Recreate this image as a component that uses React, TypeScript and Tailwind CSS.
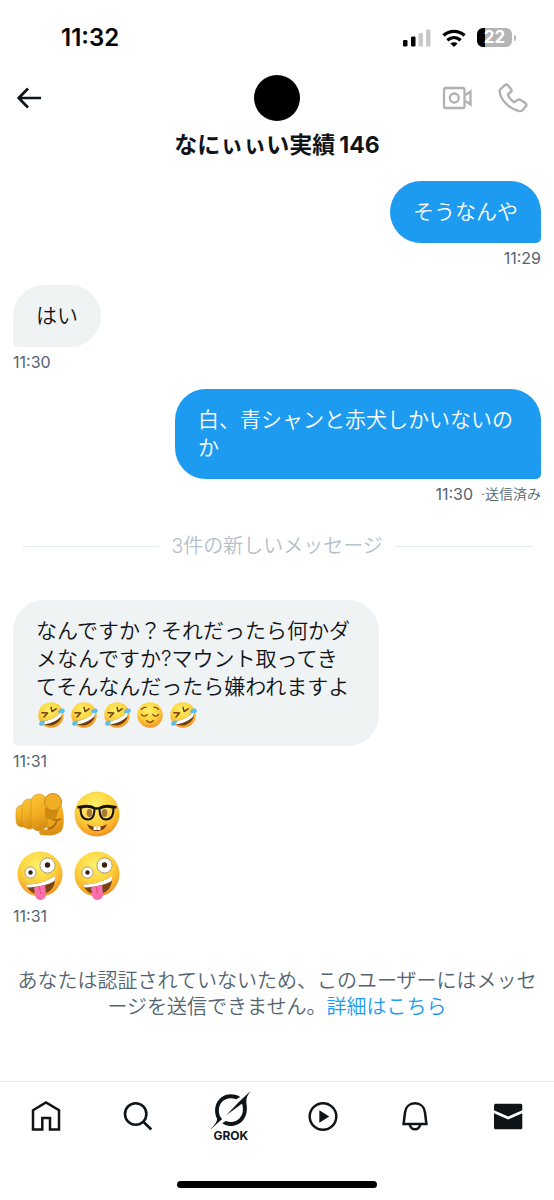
import type { ReactNode } from 'react'

function Face({ className, label, children }: { className: string; label: string; children: ReactNode }) {
  return (
    <svg viewBox="0 0 46 46" role="img" aria-label={label} className={className}>
      <defs>
        <radialGradient id="face" cx="0.45" cy="0.3" r="0.72">
          <stop offset="0" stopColor="#fff06a" />
          <stop offset="0.55" stopColor="#fdd23c" />
          <stop offset="0.85" stopColor="#f8a92a" />
          <stop offset="1" stopColor="#ea8a1e" />
        </radialGradient>
      </defs>
      <circle cx="23" cy="23" r="22.5" fill="url(#face)" />
      {children}
    </svg>
  )
}

function Rofl() {
  return (
    <Face className="h-[26px] w-[26px] overflow-visible" label="🤣">
      <path d="M6 35C18 34 32 28 42 17c2 9-2 18-11 22-9 5-19 3-25-4Z" fill="#6f3d12" />
      <path d="M6 35C18 34 32 28 42 17c.5 3 .3 6-.8 8.500C33 33 22 38.500 10.500 39Z" fill="#fff" />
      <path d="M7 19l10 .5-6.500 7M23 9.500l2 7.500 7-5" fill="none" stroke="#6b3d10" strokeWidth="2.600" strokeLinecap="round" strokeLinejoin="round" />
      <path d="M13 33c-5-1-10 1-11 4-.8 4 3 6 6 4.500 2.500-1.500 4-5 5-8.500Z" fill="#5bbdf0" />
      <path d="M35 18c1-4 5-7 9-6.500 4 1 4.500 5 2 7-3 2-7 1-11-.5Z" fill="#5bbdf0" />
    </Face>
  )
}

function Relieved() {
  return (
    <Face className="h-[26px] w-[26px]" label="😌">
      <path
        d="M8 22c2 4 8 4 10 0M28 22c2 4 8 4 10 0M17 33c3 4 9 4 12 0M8 13c2-3 5-4 8-4M38 13c-2-3-5-4-8-4"
        fill="none"
        stroke="#7a4412"
        strokeWidth="2.3"
        strokeLinecap="round"
      />
    </Face>
  )
}

function Nerd() {
  return (
    <Face className="h-[46px] w-[46px]" label="🤓">
      <ellipse cx="15.5" cy="22" rx="2.8" ry="4" fill="#7b4210" />
      <ellipse cx="30.5" cy="22" rx="2.8" ry="4" fill="#7b4210" />
      <path
        d="M6.500 17c4-1.500 10-1.500 14 .5 0 7-1.500 11-6.500 11s-7.500-4-7.500-11.500ZM39.500 17c-4-1.500-10-1.500-14 .5 0 7 1.500 11 6.500 11s7.500-4 7.500-11.500Z"
        fill="#fbe27a"
        fillOpacity="0.35"
        stroke="#17120c"
        strokeWidth="2"
      />
      <path d="M3.500 16.500c6-2 13-2 17 .5 2 .8 3 .8 5 0 4-2.500 11-2.500 17-.5" fill="none" stroke="#17120c" strokeWidth="2.400" />
      <path d="M13 33c6 4 14 4 20 0-2 5-5 7-10 7s-8-2-10-7Z" fill="#7a3a0e" />
      <path d="M19.500 35.500h3.300v3.600h-3.300ZM23.200 35.500h3.300v3.600h-3.300Z" fill="#f6fbff" />
    </Face>
  )
}

function Zany() {
  return (
    <Face className="h-[46px] w-[46px] overflow-visible" label="🤪">
      <circle cx="30.5" cy="14.5" r="7.600" fill="#fff" stroke="#a9997b" strokeWidth="1" />
      <circle cx="30.5" cy="14" r="2.700" fill="#3b2110" />
      <circle cx="13.500" cy="21.500" r="5.600" fill="#fff" stroke="#a9997b" strokeWidth="1" />
      <circle cx="13.500" cy="21.500" r="2.200" fill="#3b2110" />
      <path d="M9 33.500c10 0 20-2.500 29-8.500 1 10-4 17-13 18-8 1-14-3-16-9.500Z" fill="#7a4512" />
      <path d="M9 33.500c10 0 20-2.500 29-8.500.2 2 0 3.500-.5 5-7 4-16 6-27 6.500Z" fill="#fff" />
      <path d="M17 36.500l11-2.500 1 9c.5 7-10 8.500-11 1Z" fill="#fb6fab" />
      <path d="M22.500 36l1 7" stroke="#e04888" strokeWidth="1" />
    </Face>
  )
}

function PointingHand() {
  return (
    <svg viewBox="0 0 50 46" role="img" aria-label="🫵" className="h-[46px] w-[50px]">
      <defs>
        <linearGradient id="hand" x1="0" y1="0" x2="0.2" y2="1">
          <stop offset="0" stopColor="#fbc63a" />
          <stop offset="0.6" stopColor="#f2ad22" />
          <stop offset="1" stopColor="#d98f14" />
        </linearGradient>
      </defs>
      <path d="M26 12c8-8 19-6 21 4 2 7 3 17 0 23-4 6-14 6-21 5-3-2-2-5 1-5l6-1-9-6Z" fill="url(#hand)" />
      <path d="M35 27c4 3 7 3 11 1M33 38c5-1 8-4 9-9" fill="none" stroke="#a86808" strokeWidth="1.500" />
      <rect x="1" y="14" width="12" height="22" rx="6" fill="url(#hand)" stroke="#c98512" strokeWidth="0.500" />
      <rect x="7" y="8" width="14" height="30" rx="7" fill="url(#hand)" stroke="#c98512" strokeWidth="0.500" />
      <rect x="16" y="3" width="16" height="37" rx="8" fill="url(#hand)" stroke="#c98512" strokeWidth="0.500" />
      <path d="M30 17c4 1 10 3 14 1l-3 9c-3 3-9 2-11-1Z" fill="#d08a12" />
      <circle cx="38" cy="11" r="8.500" fill="#f0ad25" stroke="#c98512" strokeWidth="1" />
    </svg>
  )
}

function StatusBar() {
  return (
    <div className="flex h-[75px] items-center justify-between pr-[38px] pl-[61px] text-black">
      <span className="text-2xl leading-7 font-semibold">11:32</span>
      <div className="flex items-center gap-[11px]">
        <svg viewBox="0 0 28 18" className="h-[18px] w-7" aria-hidden="true">
          <rect x="0" y="11" width="4.500" height="6.500" rx="1.300" />
          <rect x="8" y="7.500" width="4.500" height="10" rx="1.300" />
          <rect x="15.500" y="4" width="4.500" height="13.500" rx="1.300" fill="#c9c9c9" />
          <rect x="23" y="0.500" width="4.500" height="17" rx="1.300" fill="#c9c9c9" />
        </svg>
        <svg viewBox="0 0 24 18" className="h-[18px] w-6" fill="none" stroke="#000" strokeWidth="3.200" aria-hidden="true">
          <path d="M1.500 6.500c6-5.500 15-5.500 21 0M5.300 11.300c4-3.600 9.400-3.600 13.400 0" />
          <path d="M12 18l-3.600-3.400c2-1.700 5.200-1.700 7.200 0Z" fill="#000" stroke="none" />
        </svg>
        <div className="flex items-center gap-[2px]">
          <div className="flex h-[19px] w-[35px] items-center justify-center rounded-md bg-linear-to-r from-black from-[23%] to-[#b5b5b5] to-[23%] text-[17px] leading-none font-bold text-white">
            22
          </div>
          <div className="h-[6px] w-[2px] rounded-r bg-[#b5b5b5]" />
        </div>
      </div>
    </div>
  )
}

function Header() {
  return (
    <header>
      <div className="grid grid-cols-3 items-center px-[26px]">
        <button aria-label="戻る" className="-ml-[10px] justify-self-start">
          <svg viewBox="0 0 26 24" className="h-6 w-[26px]" fill="none" stroke="#0f1419" strokeWidth="2.700" aria-hidden="true">
            <path d="M12 2.500L2.700 12l9.300 9.500M2.700 12H25" />
          </svg>
        </button>
        <div className="h-[46px] w-[46px] justify-self-center rounded-full bg-black" />
        <div className="flex items-center gap-[26px] justify-self-end">
          <button aria-label="ビデオ通話">
            <svg viewBox="0 0 30 24" className="h-6 w-[30px]" fill="none" stroke="#afb1b3" strokeWidth="2.300" aria-hidden="true">
              <rect x="2" y="2" width="20.500" height="20" rx="1.800" />
              <circle cx="12.300" cy="12" r="4.500" />
              <path d="M23.500 9l5-3.500v13l-5-3.500" />
            </svg>
          </button>
          <button aria-label="音声通話">
            <svg viewBox="0 0 30 30" className="h-[30px] w-[30px]" fill="none" stroke="#afb1b3" strokeWidth="2.400" strokeLinejoin="round" aria-hidden="true">
              <path d="M2.300 6.300L7.200 1.900Q8.700 .900 9.900 2.200L13.200 6.200Q14.200 7.700 12.700 9L10.200 11.200Q9.800 12.400 11.200 14.300Q13.200 17.300 16.200 19.200L18.700 17.600Q21 15.800 23 17.200L27.500 20.200Q29 21.500 28 23L24.500 27.200Q23.300 28.500 20.800 28C11.500 25.500 2.300 17.500 1.700 8.500Q1.600 7.200 2.300 6.300Z" />
            </svg>
          </button>
        </div>
      </div>
      <h1 className="mt-[10px] text-center text-[23px] leading-7 font-bold">
        なにぃぃい実績<span className="ml-1">146</span>
      </h1>
    </header>
  )
}

function Stamp({ children }: { children: ReactNode }) {
  return <p className="mt-[5px] flex gap-2 text-base leading-5 text-[#536471]">{children}</p>
}

function Message({ mine, time, status, children }: { mine?: boolean; time: string; status?: string; children: ReactNode }) {
  return (
    <div className={mine ? 'flex flex-col items-end' : 'flex flex-col items-start'}>
      <div
        className={
          mine
            ? 'max-w-[366px] rounded-[31px] rounded-br-[5px] bg-[#1d9bf0] px-[23px] py-[17px] text-[21px] leading-7 font-[350] text-white'
            : 'max-w-[366px] rounded-[31px] rounded-bl-[5px] bg-[#eff3f4] px-[23px] py-[17px] text-[21px] leading-7 font-[350]'
        }
      >
        {children}
      </div>
      <Stamp>
        {time}
        {status && <span className="text-sm leading-5 font-[350]">·{status}</span>}
      </Stamp>
    </div>
  )
}

const tabs = [
  {
    label: 'ホーム',
    icon: <path d="M3 10.300L16 2.500l13 7.800v19.300h-9V18h-7.700v11.600H3Z" fill="none" stroke="currentColor" strokeWidth="2.500" />,
  },
  {
    label: '検索',
    icon: (
      <g fill="none" stroke="currentColor" strokeWidth="2.600">
        <circle cx="13.700" cy="14" r="10.700" />
        <path d="M21.300 21.700l8 7.800" />
      </g>
    ),
  },
  { label: 'GROK', icon: null },
  {
    label: '動画',
    icon: (
      <>
        <circle cx="16" cy="16.500" r="13.300" fill="none" stroke="currentColor" strokeWidth="2.500" />
        <path d="M12.300 10.200v12.600l10-6.300Z" />
      </>
    ),
  },
  {
    label: '通知',
    icon: (
      <g fill="none" stroke="currentColor" strokeWidth="2.500">
        <path d="M4.600 24L6 12.500C6.600 7 10.500 3.300 16 3.300S25.400 7 26 12.500L27.400 24Z" />
        <path d="M10.700 24.500c.8 3.200 2.800 4.800 5.300 4.800s4.500-1.600 5.300-4.800" />
      </g>
    ),
  },
  {
    label: 'メッセージ',
    icon: (
      <>
        <path d="M2 5.200Q2 3.700 3.500 3.700h25.300q1.500 0 1.500 1.500v5.100L16.200 16.500 2 10.300Z" />
        <path d="M2 13.300l14.200 6.300 14.100-6.300v14.500q0 1.500-1.500 1.500H3.500Q2 29.300 2 27.800Z" />
      </>
    ),
  },
]

function TabBar() {
  return (
    <nav className="mt-auto border-t border-[#e6ecf0]">
      <ul className="grid h-[99px] grid-cols-6">
        {tabs.map((tab) => (
          <li key={tab.label} className="flex justify-center">
            <a href="#" aria-label={tab.label} className="flex flex-col items-center">
              {tab.icon ? (
                <svg viewBox="0 0 32 32" fill="currentColor" className="mt-[18px] h-8 w-8" aria-hidden="true">
                  {tab.icon}
                </svg>
              ) : (
                <>
                  <svg viewBox="630 62 122 120" fill="currentColor" className="mt-2 h-10 w-[41px]" aria-hidden="true">
                    <path d="M630 181C639 170 650 161 651 149C634 113 655 75 692 75C704 75 713 78 720 83L708 90C680 79 656 97 656 124C656 135 660 143 666 149Z" />
                    <path d="M751 65C741 80 737 87 739 104C746 142 723 170 692 170C681 170 673 167 666 162L677 155C704 165 731 147 728 116C727 109 727 106 725 103L678 138L716 98Z" />
                  </svg>
                  <span className="text-[12px] leading-3 font-bold">GROK</span>
                </>
              )}
            </a>
          </li>
        ))}
      </ul>
      <div className="mx-auto mb-3 h-[7px] w-[36%] rounded-full bg-black" />
    </nav>
  )
}

export default function App() {
  return (
    <div
      lang="ja"
      className="flex min-h-screen flex-col bg-white font-[Inter,'Noto_Sans_CJK_JP',sans-serif] text-[#0f1419] [line-break:anywhere]"
    >
      <StatusBar />
      <Header />
      <main className="px-[13px] pt-[22px]">
        <div className="flex flex-col gap-[17px]">
          <Message mine time="11:29">
            そうなんや
          </Message>
          <Message time="11:30">はい</Message>
          <Message mine time="11:30" status="送信済み">
            白、青シャンと赤犬しかいないのか
          </Message>
        </div>

        <div className="mt-7 mb-10 flex items-center gap-3 px-[9px]">
          <div className="h-px flex-1 bg-[#e6ecf0]" />
          <span className="text-xl leading-7 font-[350] text-[#b4c0ca]">3件の新しいメッセージ</span>
          <div className="h-px flex-1 bg-[#e6ecf0]" />
        </div>

        <Message time="11:31">
          なんですか？それだったら何かダメなんですか?マウント取ってきてそんなんだったら嫌われますよ
          <span className="flex h-7 items-center gap-[7px] pl-[2px]">
            <Rofl />
            <Rofl />
            <Rofl />
            <Relieved />
            <Rofl />
          </span>
        </Message>

        <div className="mt-5">
          <div className="flex flex-col gap-[14px] pb-1 pl-[2px]">
            <div className="flex items-center gap-[9px]">
              <PointingHand />
              <Nerd />
            </div>
            <div className="flex items-center gap-[11px] pl-[2px]">
              <Zany />
              <Zany />
            </div>
          </div>
          <Stamp>11:31</Stamp>
        </div>

        <p className="mt-[42px] text-center text-xl leading-[26px] font-[350] text-[#536471]">
          あなたは認証されていないため、このユーザーにはメッセージを送信できません。
          <a href="#" className="text-[#1d9bf0]">
            詳細はこちら
          </a>
        </p>
      </main>
      <TabBar />
    </div>
  )
}
